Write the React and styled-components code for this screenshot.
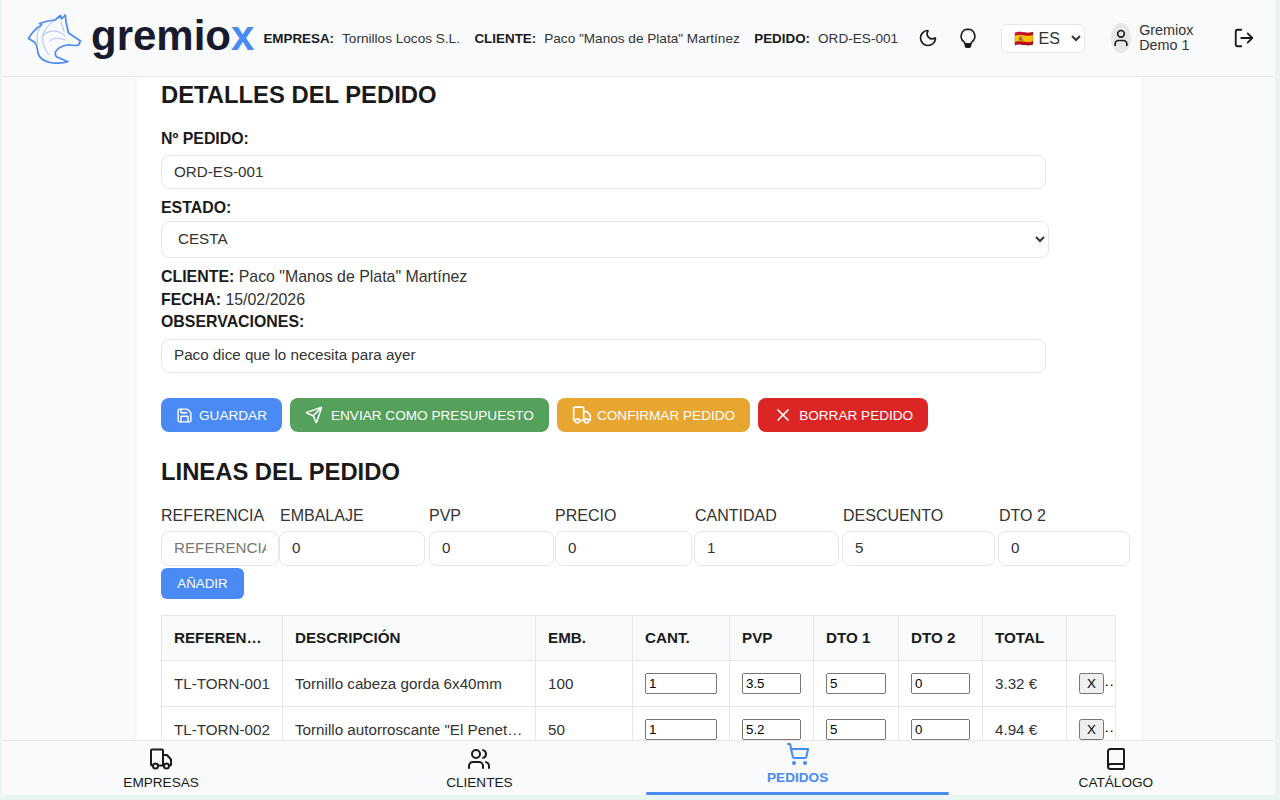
import React from "react";
import styled, { createGlobalStyle } from "styled-components";
import { Moon, LogOut, User, Save, Send, X, Users, ShoppingCart, Book } from "lucide-react";

const Global = createGlobalStyle`
  html, body { margin: 0; padding: 0; height: 100%; background: #e8f5f2; overflow: hidden; }
  body, input, select, button { font-family: "Liberation Sans", Arial, sans-serif; }
  #root { height: 100%; }
`;

const Page = styled.div`
  height: 800px;
  padding: 0 5px 5px 2px;
  box-sizing: border-box;
  background: #e8f5f2;
`;
const Shell = styled.div`
  height: 100%;
  display: flex;
  flex-direction: column;
  background: #f8fafc;
  color: #1a1a1a;
`;
const Header = styled.header`
  flex: none;
  height: 76px;
  display: flex;
  align-items: center;
  padding-left: 25px;
  background: #f8fafc;
  border-bottom: 1px solid #e5e7eb;
  box-sizing: content-box;
`;
const LogoMark = styled.svg`
  width: 57px;
  height: 51px;
  flex: none;
`;
const LogoText = styled.div`
  font-size: 42px;
  font-weight: 700;
  color: #1a1a2e;
  margin-left: 7px;
  line-height: 50px;
  margin-top: -4px;
  flex: none;
`;
const LogoX = styled.span`
  color: #4a8af4;
`;
const Info = styled.div`
  display: flex;
  gap: 14.5px;
  margin-left: 9px;
  flex: none;
`;
const InfoItem = styled.div`
  display: flex;
  gap: 8px;
  align-items: baseline;
  font-size: 13.6px;
  color: #333;
  white-space: nowrap;
`;
const InfoLabel = styled.b`
  font-size: 13.4px;
  color: #1a1a1a;
`;
const IconSlot = styled.div`
  display: flex;
  align-items: center;
  justify-content: center;
  flex: none;
  margin-left: ${(p) => p.$ml}px;
  color: #1a1a1a;
`;
const LangSelect = styled.select`
  width: 84px;
  height: 29px;
  margin-left: 22px;
  flex: none;
  padding: 0 8px;
  font-size: 16px;
  color: #333;
  background: #fff;
  border: 1px solid #e5e7eb;
  border-radius: 6px;
`;
const Avatar = styled.div`
  width: 20px;
  height: 30px;
  margin-left: 26px;
  flex: none;
  border-radius: 50%;
  background: #e5e7eb;
  display: flex;
  align-items: center;
  justify-content: center;
  color: #1a1a1a;
`;
const UserName = styled.div`
  margin-left: 8px;
  font-size: 14.4px;
  line-height: 15.5px;
  color: #333;
  width: 70px;
  flex: none;
`;
const Main = styled.main`
  flex: 1;
  min-height: 0;
  overflow: hidden;
`;
const Card = styled.div`
  width: 1004px;
  margin-left: 135px;
  box-sizing: border-box;
  padding: 4px 24px 24px;
  background: #fff;
  box-shadow: 0 0 6px rgba(0, 0, 0, 0.04);
`;
const Title = styled.h2`
  margin: ${(p) => p.$mt || 0}px 0 0;
  font-size: 23.8px;
  line-height: 28px;
  font-weight: 700;
  color: #1a1a1a;
`;
const FieldLabel = styled.label`
  display: block;
  margin-top: ${(p) => p.$mt}px;
  font-size: 15.9px;
  line-height: 20px;
  font-weight: 700;
`;
const TextInput = styled.input`
  display: block;
  box-sizing: border-box;
  width: ${(p) => p.$w || 885}px;
  height: ${(p) => p.$h || 34}px;
  margin-top: ${(p) => p.$mt || 0}px;
  padding: 0 12px 2px;
  font-size: 15.2px;
  color: #333;
  background: #fff;
  border: 1px solid #e5e7eb;
  border-radius: 8px;
  &::placeholder { color: #777; }
`;
const StateSelect = styled.select`
  display: block;
  box-sizing: border-box;
  width: 888px;
  height: 37px;
  margin-top: 3px;
  padding: 0 12px 2px;
  font-size: 15.2px;
  color: #333;
  background: #fff;
  border: 1px solid #e5e7eb;
  border-radius: 8px;
`;
const InfoBlock = styled.div`
  margin-top: ${(p) => p.$mt}px;
  font-size: 15.9px;
  line-height: 22.5px;
  color: #333;
`;
const Strong = styled.b`
  color: #1a1a1a;
`;
const Actions = styled.div`
  display: flex;
  gap: 8px;
  margin-top: 25px;
`;
const ActionButton = styled.button`
  display: flex;
  align-items: center;
  gap: ${(p) => p.$gap || 6}px;
  height: 34px;
  padding: 1px 15px 0;
  border: none;
  border-radius: 8px;
  background: ${(p) => p.$bg};
  color: #fff;
  font-size: 13.6px;
`;
const AddGrid = styled.div`
  display: grid;
  grid-template-columns: 118px 150px 126px 139px 148px 156px 132px;
  margin-top: 21px;
`;
const AddField = styled.div`
  display: flex;
  flex-direction: column;
`;
const AddLabel = styled.span`
  font-size: 16px;
  line-height: 18px;
  color: #333;
  margin-bottom: 6px;
  padding-left: ${(p) => p.$pl}px;
  white-space: nowrap;
`;
const AddButton = styled.button`
  display: block;
  width: 83px;
  height: 31px;
  margin-top: 2px;
  padding: 0;
  border: none;
  border-radius: 6px;
  background: #4a8af4;
  color: #fff;
  font-size: 13.33px;
`;
const Table = styled.table`
  width: 954px;
  margin-top: 16px;
  table-layout: fixed;
  border-collapse: collapse;
  font-size: 15.2px;
`;
const Th = styled.th`
  height: 44px;
  padding: 0 12px;
  text-align: left;
  font-weight: 700;
  color: #1a1a1a;
  background: #f8fafc;
  border: 1px solid #e5e7eb;
  overflow: hidden;
  text-overflow: ellipsis;
  white-space: nowrap;
`;
const Td = styled.td`
  height: 45px;
  padding: 0 12px;
  color: #333;
  border: 1px solid #e5e7eb;
  overflow: hidden;
  text-overflow: ellipsis;
  white-space: nowrap;
`;
const CellInput = styled.input`
  box-sizing: border-box;
  width: 100%;
  height: 21px;
  vertical-align: middle;
  font-size: 13.33px;
`;
const CellButton = styled.button`
  font-size: 13.33px;
  height: 21px;
  width: 25px;
  padding: 0;
  vertical-align: middle;
`;
const Footer = styled.nav`
  flex: none;
  height: 55px;
  display: grid;
  grid-template-columns: repeat(4, 1fr);
  background: #f8fafc;
  border-top: 1px solid #e5e7eb;
  box-sizing: border-box;
`;
const Tab = styled.div`
  position: relative;
  display: flex;
  flex-direction: column;
  align-items: center;
  padding-top: ${(p) => (p.$active ? 1 : 6)}px;
  gap: 4px;
  font-size: 13.6px;
  line-height: 16px;
  font-weight: ${(p) => (p.$active ? 700 : 400)};
  color: ${(p) => (p.$active ? "#4a8af4" : "#1a1a1a")};
  &::after {
    content: "";
    display: ${(p) => (p.$active ? "block" : "none")};
    position: absolute;
    left: 7px;
    right: 8px;
    bottom: 0;
    height: 3px;
    border-radius: 2px;
    background: #4a8af4;
  }
`;

const Wolf = () => (
  <LogoMark viewBox="0 0 57 51" fill="none" stroke="#4a8af4" strokeLinejoin="round" strokeLinecap="round">
    <path
      strokeWidth="1.7"
      d="M1.5 25.5 C5 19.5 9 15 14.7 12 L12.5 10.5 C18 8.5 23 7.5 28 7 L33.5 2.5 L34.5 6 L38.3 2 L39 9 L41.5 20 L53.5 28 L51.5 32 C47 33.5 44 31.5 40 32 C35.5 33 31 35 29.5 37.5 C27.5 40 28 42.5 30 44 L41 48.7 C36 50 28 50.5 23 49.5 C16 48 12 44 11 40 C10.5 36 10 32 8 29.5 Z"
    />
    <path strokeWidth="0.7" opacity="0.7" d="M14.7 12 C10 19 9 25 11 31 M28 7 C22 11 18 16 16 22 C15 28 17 36 22 42 M16 22 C24 16 32 17 38 23 M23 28 C28 24 33 25 38 27 M34 9 L37 18" />
  </LogoMark>
);

const Bulb = () => (
  <svg width="22" height="22" viewBox="0 0 24 24" fill="none" stroke="currentColor" strokeWidth="1.8" strokeLinecap="round" strokeLinejoin="round">
    <path d="M12 2.5a7.5 7.5 0 0 0-4.6 13.4c.9.8 1.3 1.8 1.6 2.6h6c.3-.8.7-1.8 1.6-2.6A7.5 7.5 0 0 0 12 2.5Z" />
    <path fill="currentColor" d="M9.2 18.5h5.6v2a1.5 1.5 0 0 1-1.5 1.5h-2.6a1.5 1.5 0 0 1-1.5-1.5Z" />
  </svg>
);

const TruckIcon = ({ size = 24 }) => (
  <svg width={size} height={size} viewBox="0 0 24 24" fill="none" stroke="currentColor" strokeWidth="2" strokeLinecap="round" strokeLinejoin="round">
    <path d="M4 18.5H3a1 1 0 0 1-1-1V3.500a1 1 0 0 1 1-1h10a1 1 0 0 1 1 1v15h-5" />
    <path d="M14 8h4l4 4.500v5a1 1 0 0 1-1 1h-1M14 18.500h1" />
    <circle cx="6.500" cy="19" r="2.500" />
    <circle cx="17.500" cy="19" r="2.500" />
  </svg>
);

const rows = [
  ["TL-TORN-001", "Tornillo cabeza gorda 6x40mm", "100", "1", "3.5", "5", "0", "3.32 €"],
  ["TL-TORN-002", 'Tornillo autorroscante "El Penetrador"', "50", "1", "5.2", "5", "0", "4.94 €"],
];
const widths = [121, 253, 97, 97, 84, 85, 84, 84, 49];
const headers = ["REFERENCIA", "DESCRIPCIÓN", "EMB.", "CANT.", "PVP", "DTO 1", "DTO 2", "TOTAL", ""];
const addFields = [
  ["REFERENCIA", "", 118, 0],
  ["EMBALAJE", "0", 146, 1],
  ["PVP", "0", 125, 0],
  ["PRECIO", "0", 137, 0],
  ["CANTIDAD", "1", 145, 1],
  ["DESCUENTO", "5", 153, 1],
  ["DTO 2", "0", 132, 1],
];

export default function App() {
  return (
    <Page>
      <Global />
      <Shell>
        <Header>
          <Wolf />
          <LogoText>gremio<LogoX>x</LogoX></LogoText>
          <Info>
            <InfoItem><InfoLabel>EMPRESA:</InfoLabel>Tornillos Locos S.L.</InfoItem>
            <InfoItem><InfoLabel>CLIENTE:</InfoLabel>Paco "Manos de Plata" Martínez</InfoItem>
            <InfoItem><InfoLabel>PEDIDO:</InfoLabel>ORD-ES-001</InfoItem>
          </Info>
          <IconSlot $ml={20}><Moon size={20} /></IconSlot>
          <IconSlot $ml={19}><Bulb /></IconSlot>
          <LangSelect defaultValue="es"><option value="es">🇪🇸 ES</option></LangSelect>
          <Avatar><User size={20} /></Avatar>
          <UserName>Gremiox Demo 1</UserName>
          <IconSlot $ml={24}><LogOut size={22} /></IconSlot>
        </Header>
        <Main>
          <Card>
            <Title>DETALLES DEL PEDIDO</Title>
            <FieldLabel $mt={20}>Nº PEDIDO:</FieldLabel>
            <TextInput $mt={6} defaultValue="ORD-ES-001" />
            <FieldLabel $mt={9}>ESTADO:</FieldLabel>
            <StateSelect defaultValue="CESTA"><option>CESTA</option></StateSelect>
            <InfoBlock $mt={8}>
              <div><Strong>CLIENTE:</Strong> Paco "Manos de Plata" Martínez</div>
              <div><Strong>FECHA:</Strong> 15/02/2026</div>
              <div><Strong>OBSERVACIONES:</Strong></div>
            </InfoBlock>
            <TextInput $mt={5} defaultValue="Paco dice que lo necesita para ayer" />
            <Actions>
              <ActionButton $bg="#4a8af4"><Save size={17} />GUARDAR</ActionButton>
              <ActionButton $bg="#55a05b" $gap={8}><Send size={18} />ENVIAR COMO PRESUPUESTO</ActionButton>
              <ActionButton $bg="#e8a530" $gap={5}><TruckIcon size={20} />CONFIRMAR PEDIDO</ActionButton>
              <ActionButton $bg="#dc2626"><X size={20} />BORRAR PEDIDO</ActionButton>
            </Actions>
            <Title $mt={26}>LINEAS DEL PEDIDO</Title>
            <AddGrid>
              {addFields.map(([label, value, w, pl], i) => (
                <AddField key={label}>
                  <AddLabel $pl={pl}>{label}</AddLabel>
                  <TextInput $w={w} $h={35} defaultValue={value} placeholder={i === 0 ? "REFERENCIA" : undefined} />
                </AddField>
              ))}
            </AddGrid>
            <AddButton>AÑADIR</AddButton>
            <Table>
              <colgroup>{widths.map((w, i) => <col key={i} width={w} />)}</colgroup>
              <thead>
                <tr>{headers.map((h, i) => <Th key={i}>{h}</Th>)}</tr>
              </thead>
              <tbody>
                {rows.map((r) => (
                  <tr key={r[0]}>
                    <Td>{r[0]}</Td>
                    <Td>{r[1]}</Td>
                    <Td>{r[2]}</Td>
                    {r.slice(3, 7).map((v, i) => <Td key={i}><CellInput defaultValue={v} /></Td>)}
                    <Td>{r[7]}</Td>
                    <Td><CellButton>X</CellButton> <CellButton>✓</CellButton></Td>
                  </tr>
                ))}
              </tbody>
            </Table>
          </Card>
        </Main>
        <Footer>
          <Tab><TruckIcon size={24} />EMPRESAS</Tab>
          <Tab><Users size={24} color="#1a1a1a" />CLIENTES</Tab>
          <Tab $active><ShoppingCart size={24} />PEDIDOS</Tab>
          <Tab><Book size={24} color="#1a1a1a" />CATÁLOGO</Tab>
        </Footer>
      </Shell>
    </Page>
  );
}
